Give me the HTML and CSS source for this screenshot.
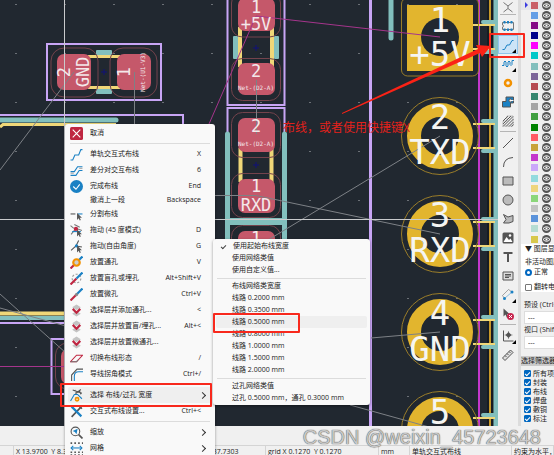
FILE: index.html
```html
<!DOCTYPE html>
<html lang="zh-CN">
<head>
  <meta charset="UTF-8">
  <meta name="viewport" content="width=device-width, initial-scale=1">
  <title>PCB 编辑器</title>
  <link rel="stylesheet" href="styles.css">
</head>
<body>
  <div class="editor">
    <div class="workspace">
      <!-- Board -->
      <main class="board">
        <svg class="board-drawing" role="img" aria-label="PCB">
          <defs>
            <pattern id="grid" x="15" y="4" width="49" height="49" patternUnits="userSpaceOnUse">
              <rect width="2" height="1" fill="#6b7076"/>
            </pattern>
            <g id="tracks">
              <path d="M33 -12H55M33 12H55" stroke="#f0d778" stroke-width="2"/>
              <path d="M43 -15H55M43 15H55" stroke="#82bfbd" stroke-width="4" stroke-linecap="round"/>
            </g>
            <g id="pin">
              <use href="#tracks"/>
              <circle r="26" fill="none" stroke="#e2b52e" stroke-width="14"/>
              <circle r="38.5" fill="none" stroke="#9a7d29"/>
            </g>
            <g id="cross"><path d="M-3 0H3M0 -3V3" stroke="#10107a"/></g>
          </defs>
          <rect width="100%" height="100%" fill="url(#grid)"/>

          <!-- board edge -->
          <path d="M479 0V426" stroke="#c437cc" stroke-width="2"/>
          <path d="M488 0V426M492 0V426" stroke="#171c22" stroke-width="2"/>
          <path d="M490 0V426" stroke="#c8992a" stroke-width="2"/>
          <path d="M496 0V426" stroke="#82bfbd" stroke-width="5"/>
          <path d="M391 0V38" stroke="#82bfbd" stroke-width="5" stroke-linecap="round"/>

          <!-- header pins -->
          <use href="#tracks" x="440" y="37"/>
          <rect x="401.500" y="-2" width="77" height="78" rx="6" fill="none" stroke="#9a7d29"/>
          <rect x="407" y="5" width="66" height="66" fill="#e2b52e"/>
          <circle cx="440" cy="37" r="19" fill="#212830"/>
          <use href="#pin" x="440" y="136"/>
          <use href="#pin" x="440" y="234"/>
          <use href="#pin" x="440" y="332"/>
          <use href="#pin" x="440" y="430"/>

          <!-- left component -->
          <rect x="47" y="44" width="114" height="56" fill="none" stroke="#c8a5f5" stroke-width="2"/>
          <path d="M88 56.500H120M88 87.500H120" stroke="#f0d778" stroke-width="3"/>
          <rect x="96" y="50" width="16" height="5" rx="1" fill="#82bfbd"/>
          <rect x="96" y="89" width="16" height="5" rx="1" fill="#82bfbd"/>
          <g fill="none" stroke="#74434c">
            <rect x="51" y="48" width="47" height="49" rx="13"/>
            <rect x="110" y="48" width="47" height="49" rx="13"/>
          </g>
          <rect x="57" y="54" width="34" height="36" rx="7" fill="#c5586a"/>
          <rect x="117" y="54" width="34" height="36" rx="7" fill="#c5586a"/>
          <use href="#cross" x="104" y="72"/>

          <!-- middle components -->
          <g fill="none" stroke="#c8a5f5" stroke-width="2">
            <path d="M227.500 0V105H284.500V0"/>
            <path d="M227.500 134V108H284.500V134"/>
            <path d="M370.500 0V426" stroke-width="3"/>
          </g>
          <path d="M227.500 134V240M284.500 134V240" stroke="#82bfbd" stroke-width="5" stroke-linecap="round"/>
          <path d="M227 221.500H285" stroke="#82bfbd" stroke-width="7"/>
          <path d="M240 27V67M272 27V67M240.500 148V182M271.500 148V182" stroke="#f0d778" stroke-width="4"/>
          <rect x="233" y="36" width="5" height="23" rx="1" fill="#82bfbd"/>
          <rect x="274" y="36" width="5" height="23" rx="1" fill="#82bfbd"/>
          <g fill="none" stroke="#74434c">
            <rect x="231.500" y="-8" width="49" height="45" rx="11"/>
            <rect x="231.500" y="58.500" width="49" height="42" rx="11"/>
            <rect x="231.500" y="112.500" width="49" height="45" rx="11"/>
            <rect x="231.500" y="173.500" width="49" height="44" rx="11"/>
            <rect x="231.500" y="225.500" width="49" height="44" rx="11"/>
          </g>
          <g fill="#c5586a">
            <rect x="238" y="-2" width="37" height="33" rx="7"/>
            <rect x="238" y="63" width="37" height="32" rx="7"/>
            <rect x="238" y="118" width="37" height="34" rx="7"/>
            <rect x="238" y="179" width="37" height="34" rx="7"/>
            <rect x="238" y="231" width="37" height="34" rx="7"/>
          </g>
          <use href="#cross" x="256" y="48"/>
          <use href="#cross" x="256" y="165"/>

          <!-- parts behind the menu -->
          <path d="M0 115H183V140" fill="none" stroke="#c8a5f5" stroke-width="2"/>
          <path d="M0 120H116" stroke="#82bfbd" stroke-width="5" stroke-linecap="round"/>
          <path d="M0 127L3 124.500H116" fill="none" stroke="#f0d778" stroke-width="3"/>
          <path d="M0 313.500H90" stroke="#f0d778" stroke-width="4"/>
          <path d="M0 318H90" stroke="#82bfbd" stroke-width="4"/>
          <path d="M0 323H90" stroke="#c8a5f5" stroke-width="2"/>
          <path d="M90 339H51.500V394H90" fill="none" stroke="#c8a5f5" stroke-width="2"/>
          <rect x="55.500" y="343" width="40" height="46" rx="12" fill="none" stroke="#74434c"/>
          <rect x="61" y="349" width="40" height="35" rx="7" fill="#c5586a"/>

          <!-- ratsnest and cursor -->
          <g fill="none" stroke="#7d8186">
            <path d="M74 72L0 170M134.500 72V124M0 294L66 353M0 308L66 326"/>
            <path d="M256.500 80V134M215 195.500H256L440 234M268 240L440 136M371 338L440 332M350 405L440 430"/>
          </g>
          <path d="M209 124L256 16L440 37M0 366.500H66" fill="none" stroke="#a5358c"/>
          <path d="M64.500 0V426M0 219.500H498" stroke="#c9cbcd"/>

          <g class="pad-label">
            <text class="pad-text" transform="translate(70 72) rotate(-90)">2</text>
            <text class="pad-text" transform="translate(89 72) rotate(-90)">GND</text>
            <text class="pad-text" transform="translate(130 72) rotate(-90)">1</text>
            <text class="net-text" transform="translate(145 72) rotate(-90)">Net-(U1-V3)</text>
            <text class="pad-text" x="256" y="13">1</text>
            <text class="pad-text" x="256" y="30">+5V</text>
            <text class="pad-text" x="256" y="77">2</text>
            <text class="net-text" x="256" y="90">Net-(D2-A)</text>
            <text class="pad-text" x="256" y="132">2</text>
            <text class="net-text" x="256" y="146">Net-(D2-A)</text>
            <text class="pad-text" x="256" y="192">1</text>
            <text class="pad-text" x="256" y="211">RXD</text>
            <text class="pad-text" x="256" y="244">1</text>
            <text class="pin-text" x="440" y="32">1</text>
            <text class="pin-text" x="440" y="66">+5V</text>
            <text class="pin-text" x="440" y="129">2</text>
            <text class="pin-text" x="440" y="164">TXD</text>
            <text class="pin-text" x="440" y="227">3</text>
            <text class="pin-text" x="440" y="262">RXD</text>
            <text class="pin-text" x="440" y="325">4</text>
            <text class="pin-text" x="440" y="361">GND</text>
            <text class="pin-text" x="440" y="424">5</text>
          </g>
        </svg>
      </main>

      <!-- Right toolbar -->
      <nav class="toolbar" aria-label="工具">
        <button class="tool tool-first" aria-label="飞线"><svg viewBox="0 0 24 24"><path d="M3 3L12 10L21 3M12 10V15M12 15L3 22M12 15L21 22" stroke="#777"/></svg></button>
        <hr>
        <button class="tool" aria-label="封装"><svg viewBox="0 0 24 24"><path d="M1 5H23V19H1V14A2 2 0 0 0 1 10Z" stroke="#777"/><path d="M5 2V7M12 2V7M19 2V7M5 17V22M12 17V22M19 17V22" stroke="#1a81c4" stroke-width="4"/></svg></button>
        <button class="tool active more" aria-label="布线"><svg viewBox="0 0 24 24"><path d="M1 21H5L10 12H15L20 3H23" stroke="#1a81c4"/></svg></button>
        <button class="tool more" aria-label="调整长度"><svg viewBox="0 0 24 24"><path d="M0 15H4V8Q6 4 8 8V16Q10 20 12 16V8Q14 4 16 8V13Q18 17 20 13V5H24" stroke="#1a81c4"/></svg></button>
        <button class="tool" aria-label="过孔"><svg viewBox="0 0 24 24"><circle cx="12" cy="12" r="6" stroke="#f29100" stroke-width="5"/></svg></button>
        <button class="tool" aria-label="敷铜"><svg viewBox="0 0 24 24"><path d="M8 2H23V14H17V22H1V11H8Z" fill="#1a81c4"/><circle cx="17" cy="9" r="3" fill="#eee" stroke="#555"/><path d="M17 9H23" stroke="#fff"/></svg></button>
        <button class="tool" aria-label="规则区域"><svg viewBox="0 0 24 24"><path d="M2 12L12 2M2 18L18 2M2 23L22 3M8 23L23 8M14 23L23 14M19 23L23 19" stroke="#555"/><path d="M2 12H10V2H22V22H2Z" stroke="#888" stroke-width="1"/></svg></button>
        <hr>
        <button class="tool" aria-label="线"><svg viewBox="0 0 24 24"><path d="M2 22L22 2"/></svg></button>
        <button class="tool" aria-label="圆弧"><svg viewBox="0 0 24 24"><path d="M3 22Q3 4 22 3"/></svg></button>
        <button class="tool" aria-label="矩形"><svg viewBox="0 0 24 24"><path d="M2 4H22V20H2Z" fill="#bbb"/></svg></button>
        <button class="tool" aria-label="圆"><svg viewBox="0 0 24 24"><circle cx="12" cy="12" r="10" fill="#bbb"/></svg></button>
        <button class="tool" aria-label="多边形"><svg viewBox="0 0 24 24"><path d="M3 3L12 8L22 5V17L14 20H3L8 13Z" fill="#bbb"/></svg></button>
        <button class="tool" aria-label="图片"><svg viewBox="0 0 24 24"><rect x="1" y="1" width="22" height="22" rx="3" fill="#545454" stroke="none"/><path d="M3 20L9 10L14 16L17 13L21 20Z" fill="#fff" stroke="none"/><circle cx="16" cy="7" r="2.500" fill="#fff" stroke="none"/></svg></button>
        <button class="tool" aria-label="文本"><svg viewBox="0 0 24 24"><path d="M3 4H21M12 4V22" stroke-width="4"/></svg></button>
        <button class="tool" aria-label="文本框"><svg viewBox="0 0 24 24"><path d="M2 4H22V20H2Z" fill="#ddd"/><path d="M6 9H18M6 12H18M6 15H14"/></svg></button>
        <button class="tool more" aria-label="标注"><svg viewBox="0 0 24 24"><path d="M1 13L13 1M1 13L5 19M13 1L20 6" stroke-width="1"/><path d="M5 19L20 6" stroke="#1a81c4" stroke-width="1"/><circle cx="5" cy="19" r="3" fill="#1a81c4" stroke="none"/><circle cx="20" cy="6" r="3" fill="#1a81c4" stroke="none"/></svg></button>
        <button class="tool" aria-label="删除"><svg viewBox="0 0 24 24"><path d="M3 1V17L7 13L10 20L13 18L10 12H15Z" fill="#545454" stroke="none"/><circle cx="17" cy="17" r="7" fill="#c7254e" stroke="none"/><path d="M14 14L20 20M20 14L14 20" stroke="#fff"/></svg></button>
        <hr>
        <button class="tool more" aria-label="原点"><svg viewBox="0 0 24 24"><path d="M3 1V22H23" /><path d="M13 2V18M5 10H21" stroke-width="1"/><path d="M13 4L16 7L19 10L16 13L13 16L10 13L7 10L10 7Z" fill="#545454" stroke="none"/></svg></button>
        <button class="tool" aria-label="测量"><svg viewBox="0 0 24 24"><path d="M1 18L17 2L22 7L6 23Z" fill="#ddd"/><path d="M6 13L9 16M10 9L13 12M14 5L17 8"/></svg></button>
      </nav>

      <!-- Appearance panel -->
      <aside class="panel">
        <ul class="layers" id="layers"></ul>
        <section class="display">
          <h2>图层显示选项</h2>
          <p>非活动图层:</p>
          <label><input type="radio" name="inactive" checked>正常</label>
          <label class="flip"><input type="checkbox">翻转电路板</label>
        </section>
        <section class="presets">
          <label for="preset">预设 (Ctrl+Tab):</label>
          <select id="preset"><option>---</option></select>
          <label for="viewport">视口 (Shift+Tab):</label>
          <select id="viewport"><option>---</option></select>
        </section>
        <section class="filter">
          <h2>选择筛选器</h2>
          <label><input type="checkbox" checked>所有项目</label>
          <label><input type="checkbox" checked>封装</label>
          <label><input type="checkbox" checked>布线</label>
          <label><input type="checkbox" checked>焊盘</label>
          <label><input type="checkbox" checked>敷铜</label>
          <label><input type="checkbox" checked>标注</label>
        </section>
      </aside>
    </div>

    <!-- Status bar -->
    <div class="messages"></div>
    <footer class="status">
      <span></span>
      <span>X 13.9700&nbsp; Y 8.3820</span>
      <span class="delta">dist 37.7303</span>
      <span>grid X 0.1270&nbsp; Y 0.1270</span>
      <span>mm</span>
      <span>单轨交互式布线</span>
      <span>约束为水平，垂直</span>
    </footer>
  </div>

  <!-- Context menu -->
  <div class="menu context-menu">
    <button><svg viewBox="0 0 24 24"><rect x="0" y="0" width="24" height="24" rx="3" fill="#bf2641"/><path d="M5 5L19 19M19 5L5 19" stroke="#fff"/></svg>取消</button>
    <hr>
    <button><svg viewBox="0 0 24 24"><path d="M1 22H5L9 13H16L20 3H23" stroke="#1a81c4"/></svg>单轨交互式布线<kbd>X</kbd></button>
    <button><svg viewBox="0 0 24 24"><path d="M1 14H8L14 5H23M1 21H11L17 12H23" stroke="#1a81c4"/><path d="M1 17H7M17 8H23" stroke="#555" stroke-width="1"/></svg>差分对交互布线<kbd>6</kbd></button>
    <button><svg viewBox="0 0 24 24"><circle cx="12" cy="12" r="12" fill="#1a81c4"/><path d="M6 12L11 17L18 8" stroke="#fff"/></svg>完成布线<kbd>End</kbd></button>
    <button class="plain">撤消上一段<kbd>Backspace</kbd></button>
    <button><svg viewBox="0 0 24 24"><path d="M1 11H10" stroke="#545454"/><path d="M14 11H23" stroke="#1a81c4"/><path d="M13 9V22L16 19L18 23L20 22L18 18H22Z" fill="#545454"/></svg>分割布线</button>
    <button><svg viewBox="0 0 24 24"><path d="M1 3L7 8M8 1L18 6M2 19L11 8L22 12" stroke="#777"/><circle cx="11" cy="9" r="4" fill="#bf2641"/><path d="M4 14H20" stroke="#1a81c4"/><path d="M13 10V23L16 20L18 24L20 23L18 19H22Z" fill="#545454"/></svg>拖动 (45 度模式)<kbd>D</kbd></button>
    <button><svg viewBox="0 0 24 24"><path d="M2 19L11 11L16 1M11 11L22 13" stroke="#545454"/><circle cx="12" cy="11" r="3" fill="#1a81c4"/><path d="M13 10V23L16 20L18 24L20 23L18 19H22Z" fill="#545454"/></svg>拖动(自由角度)<kbd>G</kbd></button>
    <button><svg viewBox="0 0 24 24"><path d="M1 23L12 12" stroke="#bf2641" stroke-width="4"/><path d="M12 12L23 1" stroke="#1a81c4" stroke-width="4"/><circle cx="12" cy="12" r="6" fill="#ccc" stroke="#f29100" stroke-width="4"/></svg>放置通孔<kbd>V</kbd></button>
    <button><svg viewBox="0 0 24 24"><circle cx="12" cy="12" r="8" stroke="#999" stroke-dasharray="4 3"/><path d="M1 23L12 12" stroke="#bf2641" stroke-width="4"/><path d="M12 12L23 1" stroke="#1a81c4" stroke-width="4"/></svg>放置盲孔或埋孔<kbd>Alt+Shift+V</kbd></button>
    <button><svg viewBox="0 0 24 24"><path d="M1 23L12 12" stroke="#bf2641" stroke-width="4"/><path d="M12 12L23 1" stroke="#1a81c4" stroke-width="4"/><circle cx="12" cy="12" r="3" fill="#888"/></svg>放置微孔<kbd>Ctrl+V</kbd></button>
    <button><svg viewBox="0 0 24 24"><path d="M12 1L20 6L12 11L4 6ZM12 13L20 18L12 23L4 18Z" fill="#c4c4c4"/><path d="M5 9L12 16L19 9" stroke="#bf2641" stroke-width="4"/></svg>选择层并添加通孔...<kbd>&lt;</kbd></button>
    <button><svg viewBox="0 0 24 24"><path d="M12 1L20 6L12 11L4 6ZM12 13L20 18L12 23L4 18Z" fill="#c4c4c4"/><path d="M5 9L12 16L19 9" stroke="#bf2641" stroke-width="4"/></svg>选择层并放置盲/埋孔...<kbd>Alt+&lt;</kbd></button>
    <button><svg viewBox="0 0 24 24"><path d="M12 1L20 6L12 11L4 6ZM12 13L20 18L12 23L4 18Z" fill="#c4c4c4"/><path d="M5 9L12 16L19 9" stroke="#bf2641" stroke-width="4"/></svg>选择层并放置微通孔...</button>
    <button><svg viewBox="0 0 24 24"><path d="M1 18H12L23 6H12Z" stroke="#bf2641"/><path d="M1 18H12L15 15" stroke="#777"/></svg>切换布线形态<kbd>/</kbd></button>
    <button><svg viewBox="0 0 24 24"><path d="M3 24V13L13 2H24" stroke="#545454"/><path d="M8 24V15Q8 7 16 7H24" stroke="#1a81c4"/></svg>导线拐角模式<kbd>Ctrl+/</kbd></button>
    <hr>
    <button class="current submenu"><svg viewBox="0 0 24 24"><path d="M1 22L8 10H14L22 18" stroke="#1a81c4"/><path d="M5 2L22 8M10 9L20 1M9 2L12 8M17 2L20 10" stroke="#545454"/><circle cx="13" cy="19" r="3" stroke="#f29100" stroke-width="3"/></svg>选择 布线/过孔 宽度</button>
    <button><svg viewBox="0 0 24 24"><path d="M3 22L21 3M17 2L22 7" stroke="#545454" stroke-width="3"/><path d="M3 3L21 21" stroke="#1a81c4" stroke-width="4"/></svg>交互式布线设置...<kbd>Ctrl+&lt;</kbd></button>
    <hr>
    <button class="submenu"><svg viewBox="0 0 24 24"><circle cx="10" cy="10" r="8" stroke="#545454"/><path d="M16 16L23 23" stroke="#545454" stroke-width="3"/><path d="M5 9L14 5L12 15L9 11Z" fill="#1a81c4"/></svg>缩放</button>
    <button class="submenu"><svg viewBox="0 0 24 24"><path d="M1 2H24M1 19H24M1 24H24" stroke="#545454" stroke-width="3" stroke-dasharray="3 4"/><path d="M2 11H22" stroke="#1a81c4"/><path d="M6 7L2 11L6 15M18 7L22 11L18 15" stroke="#1a81c4"/></svg>网格</button>
  </div>

  <!-- Track width submenu -->
  <div class="menu width-menu">
    <button class="checked">使用起始布线宽度</button>
    <button>使用网络类值</button>
    <button>使用自定义值...</button>
    <hr>
    <button>布线网络类宽度</button>
    <button>线路 0.2000 mm</button>
    <button>线路 0.3500 mm</button>
    <button class="current">线路 0.5000 mm</button>
    <button>线路 0.8000 mm</button>
    <button>线路 1.0000 mm</button>
    <button>线路 1.5000 mm</button>
    <button>线路 2.0000 mm</button>
    <hr>
    <button>过孔网络类值</button>
    <button>过孔 0.5000 mm，通孔 0.3000 mm</button>
  </div>

  <!-- Tutorial marks -->
  <div class="mark mark-tool"></div>
  <div class="mark mark-item"></div>
  <div class="mark mark-width"></div>
  <svg class="arrow" viewBox="0 0 150 70"><path d="M0 68L136 4L134 0L149 1L140 12L138 8L0 69Z" fill="#fb2216"/></svg>
  <p class="note">布线，或者使用快捷键X</p>
  <p class="watermark">CSDN @weixin_45723648</p>

  <script>
    const colors = [
      "#c95f68", "#659fe6", "#860a86", "#00008b", "#ff00ff", "#00c8c8",
      "#82bfbd", "#7d6599", "#b64b52", "#35876f", "#a6a6a6", "#40a040",
      "#008200", "#ff5a65", "#c8a23a", "#c437cc", "#cba8fa", "#93dade",
      "#efd57c", "#8bd67a", "#c2c2c2", "#5b93db", "#b5dcd2", "#d8c84c"
    ];

    // One row per layer: colour swatch and visibility eye
    document.getElementById("layers").innerHTML = colors.map(color => `
      <li>
        <span class="swatch" style="background:${color}"></span>
        <svg class="eye" viewBox="0 0 18 18">
          <circle cx="9" cy="9" r="9" fill="#545454"/>
          <path d="M2 9Q9 2 16 9Q9 16 2 9Z" fill="#545454" stroke="#fff" stroke-width="2"/>
          <circle cx="9" cy="9" r="2" fill="#fff"/>
        </svg>
      </li>`).join("");
  </script>
</body>
</html>
```
FILE: styles.css
```css
* {
  margin: 0;
  padding: 0;
  box-sizing: border-box;
}
body {
  height: 100vh;
  overflow: hidden;
  font-family: "Open Sans", "Noto Sans CJK SC", sans-serif;
  font-size: 7px;
  line-height: 10px;
  color: #222;
  background: #f0f0f0;
}
button, select, input, kbd {
  font: inherit;
  color: inherit;
}
svg {
  fill: none;
  stroke-width: 2;
}
.editor {
  display: flex;
  flex-direction: column;
  height: 100vh;
}
.workspace {
  display: flex;
  flex: 1;
  min-height: 0;
}
/* Board */
.board {
  flex: 1;
  min-width: 0;
  overflow: hidden;
  background: #212830;
}
.board-drawing {
  display: block;
  width: 100%;
  height: 100%;
  stroke-width: 1;
}
.pad-label {
  font-family: "DejaVu Sans Mono", monospace;
  fill: #f4e8ea;
  text-anchor: middle;
}
.pad-text {
  font-size: 17px;
}
.net-text {
  font-size: 6px;
}
.pin-text {
  font-size: 34px;
  fill: #f5f5f2;
}
/* Toolbar */
.toolbar {
  width: 20px;
  overflow: hidden;
  background: #f0f0f0;
}
.toolbar hr {
  height: 1px;
  margin: 1px 2px;
  border: none;
  background: #b5b5b5;
}
.tool {
  display: flex;
  position: relative;
  align-items: center;
  justify-content: center;
  width: 20px;
  height: 19px;
  border: 1px solid transparent;
  background: none;
}
.tool-first {
  height: 13px;
}
.tool svg {
  width: 12px;
  height: 12px;
  flex: none;
  stroke: #545454;
}
.tool.active {
  border-color: #90c4ec;
  background: #cce4f7;
}
.tool.more::after {
  content: "";
  position: absolute;
  right: 1px;
  bottom: 0;
  border-left: 4px solid transparent;
  border-bottom: 4px solid #000;
}
/* Appearance panel */
.panel {
  display: flex;
  flex-direction: column;
  width: 36px;
  overflow: hidden;
  white-space: nowrap;
  border-left: 3px solid #dcdcdc;
  background: #f0f0f0;
}
.layers {
  display: flex;
  flex-direction: column;
  flex: none;
  height: 244px;
  list-style: none;
}
.layers li {
  display: flex;
  flex: 1;
  align-items: center;
  gap: 4px;
  padding-left: 10px;
}
.layers li:first-child {
  position: relative;
  background: #e6e6ea;
}
.layers li:first-child::before {
  content: "";
  position: absolute;
  left: 4px;
  border: 3px solid transparent;
  border-left-color: #3b3be0;
}
.swatch {
  width: 7px;
  height: 7px;
}
.eye {
  width: 9px;
  height: 9px;
}
.panel h2 {
  font-size: 7px;
  line-height: 10px;
  font-weight: normal;
}
.panel label {
  display: flex;
  align-items: center;
  gap: 2px;
}
.display {
  padding-left: 4px;
  background: #fff;
}
.display h2::before {
  content: "▼ ";
}
.display p {
  margin-top: 3px;
}
.display .flip {
  margin-top: 5px;
}
.panel input {
  appearance: none;
  flex: none;
  width: 7px;
  height: 7px;
  border: 1px solid #777;
  border-radius: 1px;
  background: #fff;
}
.panel input[type="radio"] {
  border: 2px solid #0067c0;
  border-radius: 50%;
}
.panel input[type="checkbox"]:checked {
  border-color: #0067c0;
  background: #0067c0;
}
.filter input:checked::after {
  content: "";
  display: block;
  width: 4px;
  height: 2px;
  margin-top: 1px;
  border-left: 1px solid #fff;
  border-bottom: 1px solid #fff;
  transform: rotate(-45deg);
}
.presets {
  padding: 7px 0 7px 3px;
}
.presets label {
  height: 12px;
}
.presets select {
  appearance: none;
  display: block;
  width: 40px;
  height: 13px;
  padding-left: 3px;
  border: 1px solid #ddd;
  background: #fff;
}
.filter {
  display: flex;
  flex-direction: column;
}
.filter h2 {
  margin-bottom: 3px;
  background: #cacaca;
}
.filter label {
  height: 9px;
  padding-left: 3px;
}
/* Status bar */
.messages {
  height: 19px;
}
.status {
  display: grid;
  grid-template-columns: 14px 175px 1fr 113px 31px 102px 42px;
  height: 10px;
  overflow: hidden;
  white-space: nowrap;
  border-top: 1px solid #d4d4d4;
  line-height: 12px;
}
.status span {
  padding-left: 2px;
  border-right: 1px solid #d4d4d4;
}
.status .delta {
  padding-left: 10px;
}
/* Menus */
.menu {
  position: absolute;
  padding: 1px 3px;
  border-radius: 3px;
  background: #f9f9f9;
  box-shadow: 0 1px 3px rgba(0,0,0,0.4);
}
.menu hr {
  border: none;
  border-top: 1px solid #dcdcdc;
}
.menu button {
  display: flex;
  align-items: center;
  width: 100%;
  border: none;
  border-radius: 2px;
  background: none;
  white-space: nowrap;
}
.menu .current {
  background: #efefef;
}
.context-menu {
  left: 65px;
  top: 124px;
  width: 150px;
}
.context-menu hr {
  margin: 2px;
}
.context-menu button {
  height: 16px;
  padding: 0 11px 0 2px;
}
.context-menu .plain {
  height: 12px;
  padding-left: 22px;
}
.context-menu svg {
  width: 13px;
  height: 13px;
  margin-right: 7px;
}
.menu kbd {
  margin-left: auto;
}
.menu .submenu::after {
  content: "";
  width: 4px;
  height: 4px;
  margin-left: auto;
  margin-right: -4px;
  border-top: 1px solid #333;
  border-right: 1px solid #333;
  transform: rotate(45deg);
}
.width-menu {
  left: 213px;
  top: 239px;
  width: 157px;
}
.width-menu hr {
  margin: 2px 1px 1px;
}
.width-menu button {
  height: 12px;
  padding-left: 16px;
}
.width-menu .checked {
  padding-left: 5px;
}
.width-menu .checked::before {
  content: "";
  width: 4px;
  height: 2px;
  margin-right: 7px;
  border-left: 1px solid #444;
  border-bottom: 1px solid #444;
  transform: rotate(-45deg);
}
/* Tutorial marks */
.mark {
  position: absolute;
  border: 2px solid #f8291d;
  border-radius: 1px;
}
.mark-tool {
  left: 489px;
  top: 33px;
  width: 36px;
  height: 25px;
}
.mark-item {
  left: 60px;
  top: 383px;
  width: 152px;
  height: 24px;
}
.mark-width {
  left: 213px;
  top: 313px;
  width: 87px;
  height: 20px;
}
.arrow {
  position: absolute;
  left: 342px;
  top: 45px;
  width: 150px;
  height: 70px;
}
.note {
  position: absolute;
  left: 283px;
  top: 120px;
  font-size: 12px;
  line-height: 16px;
  white-space: nowrap;
  color: #e3211b;
}
.watermark {
  position: absolute;
  right: 13px;
  bottom: 6px;
  font-family: "Liberation Sans", sans-serif;
  font-size: 20px;
  line-height: 24px;
  white-space: nowrap;
  color: #c8c8c8;
  text-shadow: 0 0 1px #555, 0 0 1px #777;
}
```
